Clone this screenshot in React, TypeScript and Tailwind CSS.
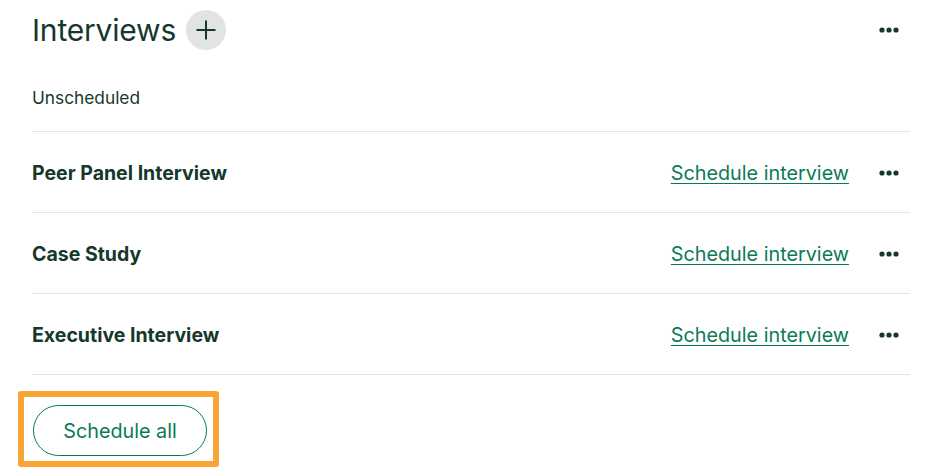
import React from "react";

const Dots = () => (
  <svg width="20" height="6" viewBox="0 0 20 6" className="block">
    <circle cx="3" cy="3" r="2.6" fill="#15372c" />
    <circle cx="10" cy="3" r="2.6" fill="#15372c" />
    <circle cx="17" cy="3" r="2.6" fill="#15372c" />
  </svg>
);

const rows = ["Peer Panel Interview", "Case Study", "Executive Interview"];

export default function App() {
  return (
    <div
      className="w-[940px] h-[469px] bg-white overflow-hidden pl-[32px] pr-[30px] text-[#15372c]"
      style={{ fontFamily: "Inter, 'Noto Sans', sans-serif" }}
    >
      <div className="h-[60px] flex items-center justify-between">
        <div className="flex items-center gap-[10px]">
          <h1 className="text-[30px] font-normal tracking-[-0.2px] leading-none">Interviews</h1>
          <button className="w-[40px] h-[40px] rounded-full bg-[#e1e4e2] flex items-center justify-center">
            <svg width="22" height="22" viewBox="0 0 22 22">
              <path d="M11 1.5V20.5M1.5 11H20.5" stroke="#15372c" strokeWidth="2" />
            </svg>
          </button>
        </div>
        <div className="pr-[11px]">
          <Dots />
        </div>
      </div>
      <div className="h-[72px] border-b border-[#e4e6e5] flex items-center pt-[4px]">
        <span className="text-[17.3px] leading-none">Unscheduled</span>
      </div>
      {rows.map((r) => (
        <div key={r} className="h-[81px] border-b border-[#e4e6e5] flex items-center justify-between pt-[3px]">
          <span className="text-[19.5px] font-bold leading-none">{r}</span>
          <div className="flex items-center gap-[30px] pr-[11px]">
            <a
              href="#"
              className="text-[19.8px] text-[#0a7a55] underline underline-offset-[3px] decoration-1 leading-none"
            >
              Schedule interview
            </a>
            <Dots />
          </div>
        </div>
      ))}
      <div className="mt-[16px] ml-[-14px] inline-block border-[6px] border-[#f8a535] rounded-[3px] pl-[9px] pt-[8px] pr-[6px] pb-[5px]">
        <button className="w-[174px] h-[51px] rounded-full border border-[#0a7a55] text-[#0a7a55] text-[19.8px] flex items-center justify-center pt-[2px]">
          Schedule all
        </button>
      </div>
    </div>
  );
}
